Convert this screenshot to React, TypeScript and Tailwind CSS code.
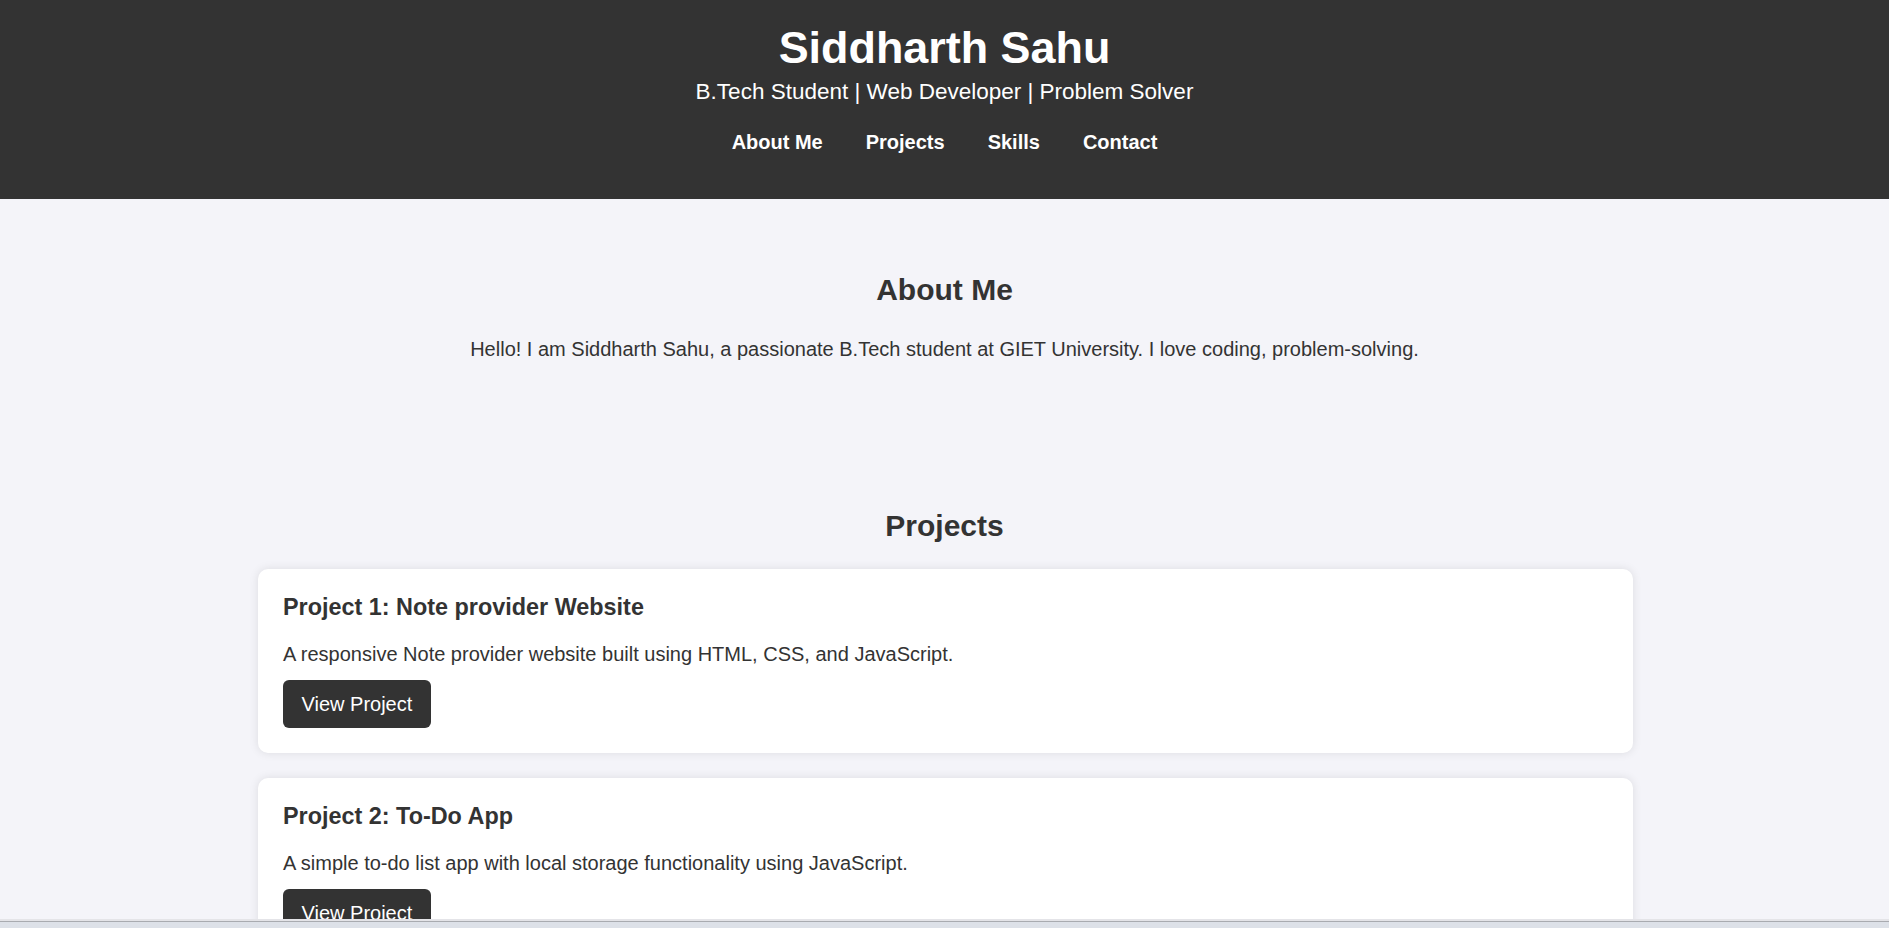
import React from "react";

const projects = [
  {
    title: "Project 1: Note provider Website",
    desc: "A responsive Note provider website built using HTML, CSS, and JavaScript.",
  },
  {
    title: "Project 2: To-Do App",
    desc: "A simple to-do list app with local storage functionality using JavaScript.",
  },
];

export default function App() {
  return (
    <div
      className="min-h-screen bg-[#f4f4f9] text-[#333333]"
      style={{ fontFamily: '"Liberation Sans", Arial, sans-serif' }}
    >
      <header className="h-[199px] bg-[#333333] pt-[21.5px] text-center text-white">
        <h1 className="text-[44.9px] font-bold leading-[52px]">Siddharth Sahu</h1>
        <p className="mt-[5.5px] text-[22.5px] leading-[26px]">
          B.Tech Student | Web Developer | Problem Solver
        </p>
        <nav className="mt-[26px] flex justify-center gap-[43px] text-[20px] font-bold leading-[23px]">
          <a href="#about">About Me</a>
          <a href="#projects">Projects</a>
          <a href="#skills">Skills</a>
          <a href="#contact">Contact</a>
        </nav>
      </header>

      <main className="pb-[40px]">
        <section id="about" className="mt-[74px] text-center">
          <h2 className="text-[30px] font-bold leading-[34px]">About Me</h2>
          <p className="mt-[31px] text-[20px] leading-[23px]">
            Hello! I am Siddharth Sahu, a passionate B.Tech student at GIET University. I love coding,
            problem-solving.
          </p>
        </section>

        <section id="projects" className="mt-[148px]">
          <h2 className="text-center text-[30px] font-bold leading-[34px]">Projects</h2>
          <div className="mx-auto mt-[26px] flex w-[1375px] translate-x-[1px] flex-col gap-[25px]">
            {projects.map((p) => (
              <div
                key={p.title}
                className="rounded-[10px] bg-white p-[25px] shadow-[0_0_10px_rgba(0,0,0,0.1)]"
              >
                <h3 className="text-[23.4px] font-bold leading-[27px]">{p.title}</h3>
                <p className="mt-[22px] text-[20px] leading-[23px]">{p.desc}</p>
                <button className="mt-[14px] h-[48px] rounded-[6px] bg-[#333333] px-[18.5px] text-[20px] leading-[23px] text-white">
                  View Project
                </button>
              </div>
            ))}
          </div>
        </section>
      </main>

      <div className="fixed bottom-0 left-0 right-0 h-[9px]">
        <div className="h-[2px] bg-[#e4e4e8]" />
        <div className="h-[1px] bg-[#a9abb0]" />
        <div className="h-[6px] bg-[#dde1e8]" />
      </div>
    </div>
  );
}
